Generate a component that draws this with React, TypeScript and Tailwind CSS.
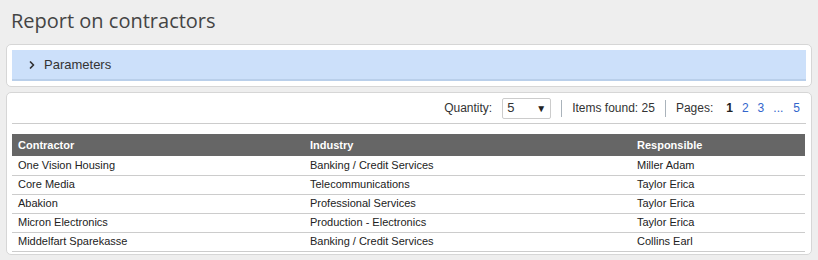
import { ChevronRight } from "lucide-react";

const rows = [
  { contractor: "One Vision Housing", industry: "Banking / Credit Services", responsible: "Miller Adam" },
  { contractor: "Core Media", industry: "Telecommunications", responsible: "Taylor Erica" },
  { contractor: "Abakion", industry: "Professional Services", responsible: "Taylor Erica" },
  { contractor: "Micron Electronics", industry: "Production - Electronics", responsible: "Taylor Erica" },
  { contractor: "Middelfart Sparekasse", industry: "Banking / Credit Services", responsible: "Collins Earl" },
];

export default function App() {
  return (
    <div className="w-[818px] h-[260px] bg-[#eeeeee] px-[6px] font-['Liberation_Sans',Arial,sans-serif] text-[#333]">
      <h1 className="pl-[5px] pt-[7px] h-[44px] text-[20px] leading-[28px] font-['Open_Sans',sans-serif] text-[#444]">
        Report on contractors
      </h1>

      {/* parameters panel */}
      <div className="bg-white border border-[#d6d6d6] rounded-[5px] p-[5px]">
        <div className="h-[31px] bg-[#cce0fa] border-b-[2px] border-[#b9cfea] flex items-center pl-[14px] gap-[6px] text-[13px] text-[#333]">
          <ChevronRight size={12} strokeWidth={3.5} className="text-[#333]" />
          <span>Parameters</span>
        </div>
      </div>

      {/* results panel */}
      <div className="mt-[5px] bg-white border border-[#d6d6d6] rounded-[5px] px-[5px] pb-[4px] h-[163px]">
        <div className="h-[31px] border-b border-[#cccccc] flex items-center justify-end pr-[6px] text-[12px] text-[#333]">
          <span>Quantity:</span>
          <div className="ml-[10px] w-[49px] h-[21px] border border-[#cccccc] rounded-[2px] flex items-center justify-between px-[4px] text-[13px]">
            <span>5</span>
            <span className="text-[10px] text-[#222]">▼</span>
          </div>
          <div className="mx-[10px] w-px h-[17px] bg-[#aab3bb]" />
          <span>Items found: 25</span>
          <div className="mx-[10px] w-px h-[17px] bg-[#aab3bb]" />
          <span>Pages:</span>
          <div className="ml-[13px] flex gap-[9px] text-[12px]">
            <span className="font-bold text-[#222]">1</span>
            <span className="text-[#3366cc]">2</span>
            <span className="text-[#3366cc]">3</span>
            <span className="text-[#3366cc]">...</span>
            <span className="text-[#3366cc] ml-[1px]">5</span>
          </div>
        </div>

        <table className="mt-[10px] w-[793px] border-collapse text-[11px] text-[#222]">
          <thead>
            <tr className="bg-[#666666] text-white h-[22px]">
              <th className="w-[292px] text-left font-bold pl-[6px]">Contractor</th>
              <th className="w-[327px] text-left font-bold pl-[6px]">Industry</th>
              <th className="text-left font-bold pl-[6px]">Responsible</th>
            </tr>
          </thead>
          <tbody>
            {rows.map((r, i) => (
              <tr key={i} className="h-[19px] border-b border-[#cccccc]">
                <td className="pl-[6px]">{r.contractor}</td>
                <td className="pl-[6px]">{r.industry}</td>
                <td className="pl-[6px]">{r.responsible}</td>
              </tr>
            ))}
          </tbody>
        </table>
      </div>
    </div>
  );
}
